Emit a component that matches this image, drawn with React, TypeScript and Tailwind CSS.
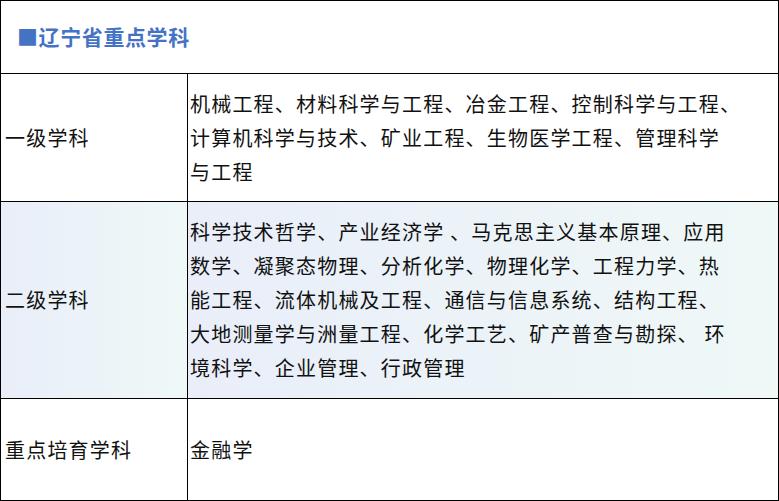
const font = "font-['Noto_Sans_CJK_SC','Noto_Sans',sans-serif]";

// rows of the table, wraps kept as in the source
const rows = [
  {
    label: "一级学科",
    lines: [
      "机械工程、材料科学与工程、冶金工程、控制科学与工程、",
      "计算机科学与技术、矿业工程、生物医学工程、管理科学",
      "与工程",
    ],
    height: "h-[128px]",
    shaded: false,
  },
  {
    label: "二级学科",
    lines: [
      "科学技术哲学、产业经济学 、马克思主义基本原理、应用",
      "数学、凝聚态物理、分析化学、物理化学、工程力学、热",
      "能工程、流体机械及工程、通信与信息系统、结构工程、",
      "大地测量学与洲量工程、化学工艺、矿产普查与勘探、 环",
      "境科学、企业管理、行政管理",
    ],
    height: "h-[197px]",
    shaded: true,
  },
  {
    label: "重点培育学科",
    lines: ["金融学"],
    height: "flex-1",
    shaded: false,
  },
];

export default function App() {
  return (
    <div
      className={`flex h-[501px] w-[779px] flex-col border border-black bg-white text-[20px] tracking-[1.2px] text-[#111] ${font}`}
    >
      <div className="flex h-[73px] items-center border-b border-black pl-[16px]">
        <span className="text-[21px] font-bold tracking-[0.6px] text-[#4472c4]">■辽宁省重点学科</span>
      </div>
      {rows.map((row, i) => (
        <div
          key={row.label}
          className={`flex ${row.height} ${i < rows.length - 1 ? "border-b border-black" : ""}`}
        >
          <div
            className={`flex w-[187px] shrink-0 items-center border-r border-black pl-[4px] ${
              row.shaded ? "bg-gradient-to-r from-[#e9eef9] to-[#eff8f7]" : ""
            }`}
          >
            {row.label}
          </div>
          <div
            className={`flex flex-1 flex-col justify-center pl-[2px] leading-[34px] ${
              row.shaded ? "bg-gradient-to-r from-[#e9eef9] to-[#eff8f7]" : ""
            }`}
          >
            {row.lines.map((line) => (
              <div key={line} className="whitespace-pre">
                {line}
              </div>
            ))}
          </div>
        </div>
      ))}
    </div>
  );
}
